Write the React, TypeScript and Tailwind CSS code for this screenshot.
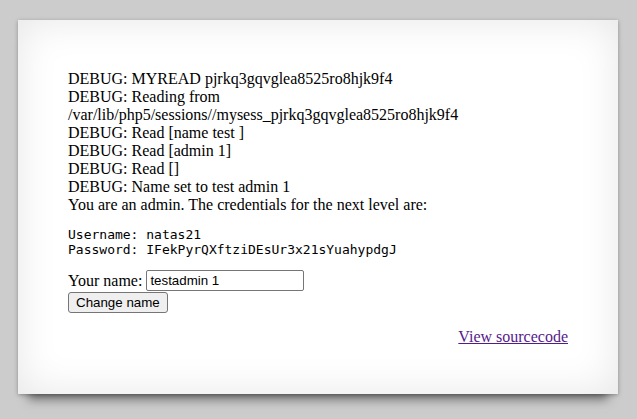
import React from "react";

const debugLines = [
  "DEBUG: MYREAD pjrkq3gqvglea8525ro8hjk9f4",
  "DEBUG: Reading from /var/lib/php5/sessions//mysess_pjrkq3gqvglea8525ro8hjk9f4",
  "DEBUG: Read [name test ]",
  "DEBUG: Read [admin 1]",
  "DEBUG: Read []",
  "DEBUG: Name set to test admin 1",
];

export default function App() {
  return (
    <div className="min-h-screen bg-[#cccccc] pt-5 font-['Liberation_Serif',serif] text-[16px] leading-[normal] text-black">
      <div className="ml-[18px] w-[600px] bg-white px-[50px] pt-[50px] pb-[48px] shadow-[0_15px_10px_-10px_rgba(0,0,0,0.5),0_1px_4px_rgba(0,0,0,0.3),inset_0_0_40px_rgba(0,0,0,0.1)]">
        {/* debug output */}
        <div className="w-[400px]">
          {debugLines.map((line, i) => (
            <div key={i}>{line}</div>
          ))}
        </div>
        <div>You are an admin. The credentials for the next level are:</div>
        <pre className="my-[13px] font-['DejaVu_Sans_Mono',monospace] text-[13px] leading-[normal]">
          Username: natas21{"\n"}Password: IFekPyrQXftziDEsUr3x21sYuahypdgJ
        </pre>

        <form className="mb-[15px]" onSubmit={(e) => e.preventDefault()}>
          <div className="flex items-center">
            <span>Your name:&nbsp;</span>
            <input
              defaultValue="testadmin 1"
              className="h-[21px] w-[158px] rounded-[2px] border border-[#767676] px-[3px] font-['Liberation_Sans',sans-serif] text-[13.33px] text-black"
            />
          </div>
          <button
            type="submit"
            className="mt-px h-[21px] rounded-[3px] border border-[#767676] bg-[#efefef] px-[7px] font-['Liberation_Sans',sans-serif] text-[13.33px] leading-none text-black"
          >
            Change name
          </button>
        </form>

        <div className="text-right">
          <a href="#" className="text-[#551a8b] underline">
            View sourcecode
          </a>
        </div>
      </div>
    </div>
  );
}
